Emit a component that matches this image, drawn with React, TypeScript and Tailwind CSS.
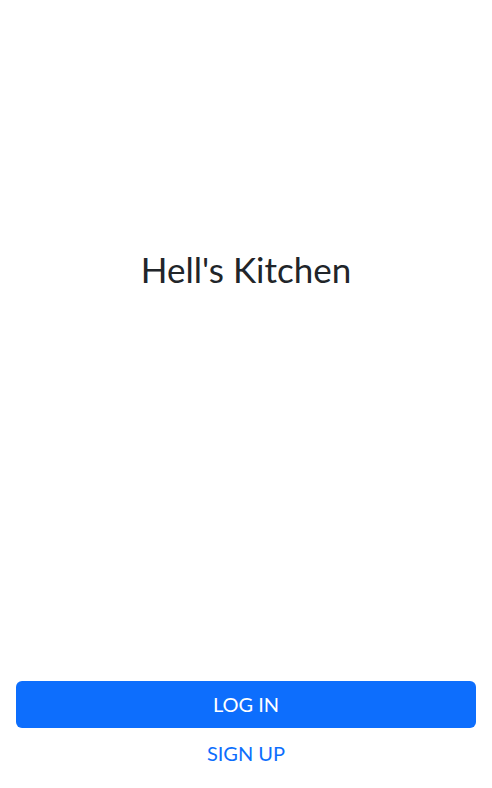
import React from "react";

export default function App() {
  return (
    <div
      className="flex h-[788px] w-full flex-col bg-white"
      style={{ fontFamily: "Lato, 'Liberation Sans', sans-serif" }}
    >
      <div className="flex flex-1 items-start justify-center pt-[248px]">
        <h1 className="text-[35px] font-normal leading-[1.2] text-[#212529]">Hell's Kitchen</h1>
      </div>
      <div className="flex flex-col px-4 pb-[11px]">
        <button className="h-[47px] w-full rounded-md bg-[#0d6efd] pb-[2px] text-[20px] leading-[1.5] text-white">
          LOG IN
        </button>
        <button className="mt-[1px] h-[48px] w-full text-[20px] leading-[1.5] text-[#0d6efd]">
          SIGN UP
        </button>
      </div>
    </div>
  );
}
